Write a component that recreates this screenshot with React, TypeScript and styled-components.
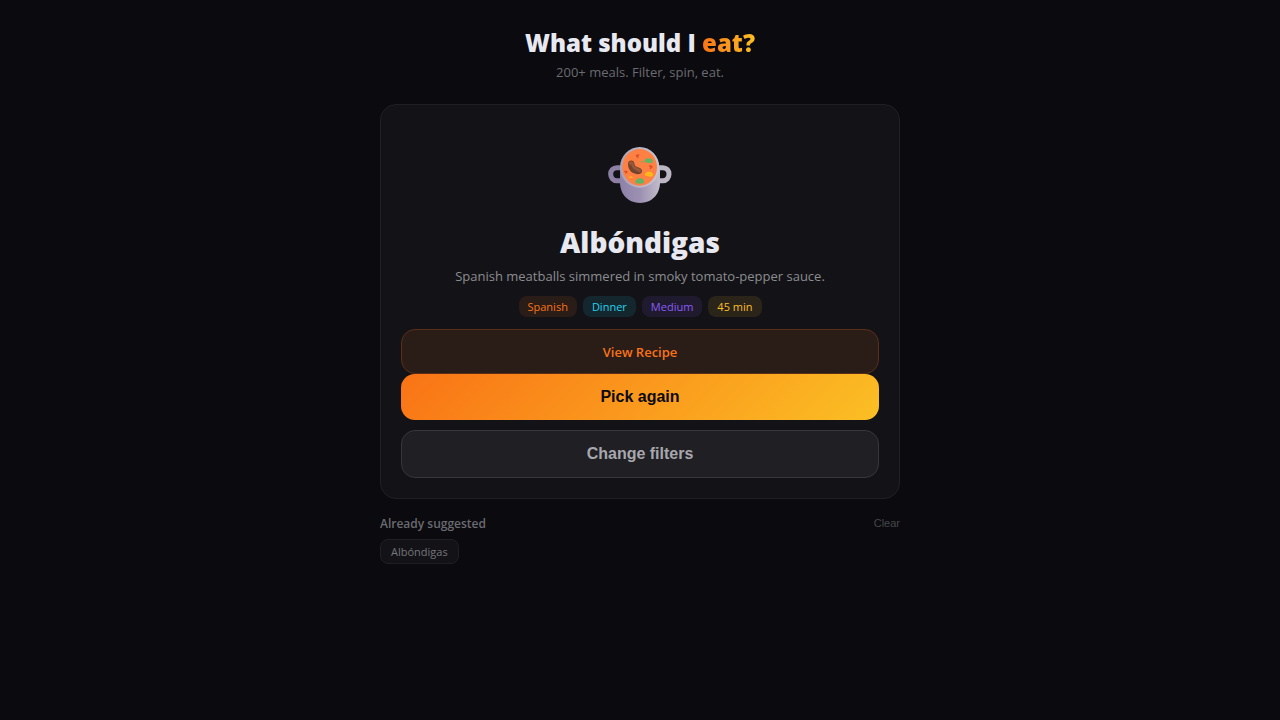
import React from "react";
import styled, { createGlobalStyle } from "styled-components";

const GlobalStyle = createGlobalStyle`
  *, *::before, *::after { box-sizing: border-box; }
  body {
    margin: 0;
    min-height: 100vh;
    background: #0a0a0f;
    color: #e8e8f0;
    font-family: "Segoe UI", "Open Sans", "Noto Sans", sans-serif;
  }
  button { cursor: pointer; }
`;

const Page = styled.main`
  width: 100%;
  max-width: 552px;
  margin: 0 auto;
  padding: 24px 16px;
`;

const Header = styled.header`
  text-align: center;
  margin-bottom: 22px;
`;

const Title = styled.h1`
  margin: 0;
  font-size: 24px;
  font-weight: 800;
  line-height: 38px;
`;

const Accent = styled.span`
  background: linear-gradient(90deg, #f97316, #fbbf24);
  background-clip: text;
  -webkit-background-clip: text;
  color: transparent;
`;

const Subtitle = styled.p`
  margin: 0;
  font-size: 13px;
  line-height: 20px;
  color: #6b6b70;
`;

const Card = styled.section`
  display: flex;
  flex-direction: column;
  align-items: center;
  padding: 20px;
  background: #131317;
  border: 1px solid #1f1f24;
  border-radius: 16px;
  text-align: center;
`;

const MealArt = styled.svg`
  display: block;
  width: 64px;
  height: 56px;
  margin: 22px 0 20px;
`;

const MealName = styled.h2`
  margin: 0 0 4px;
  font-size: 28px;
  font-weight: 800;
  line-height: 38px;
`;

const Description = styled.p`
  margin: 0 0 8px;
  font-size: 13px;
  line-height: 23px;
  color: #8c8c90;
`;

const Tags = styled.ul`
  display: flex;
  flex-wrap: wrap;
  justify-content: center;
  gap: 6px;
  margin: 0 0 12px;
  padding: 0;
  list-style: none;
`;

const Tag = styled.li<{ $color: string; $fill: string }>`
  padding: 0 9px;
  border-radius: 8px;
  font-size: 11px;
  font-weight: 500;
  line-height: 21px;
  color: ${(p) => p.$color};
  background: ${(p) => p.$fill};
`;

const ActionButton = styled.button`
  width: 100%;
  padding: 0 16px;
  border: 1px solid transparent;
  border-radius: 14px;
  font-family: "Liberation Sans", Arial, sans-serif;
  font-size: 16px;
  font-weight: 700;
`;

const RecipeButton = styled(ActionButton)`
  height: 45px;
  font-family: "Segoe UI", "Open Sans", "Noto Sans", sans-serif;
  font-size: 13px;
  font-weight: 600;
  color: #f97316;
  background: #2a1c17;
  border-color: #5a2e17;
`;

const PickButton = styled(ActionButton)`
  height: 46px;
  border: 0;
  color: #0a0a0f;
  background: linear-gradient(135deg, #f97316, #fbbf24);
`;

const FiltersButton = styled(ActionButton)`
  height: 48px;
  margin-top: 10px;
  color: #a7a7ad;
  background: #202024;
  border-color: #36363b;
`;

const HistoryHeader = styled.div`
  display: flex;
  align-items: flex-start;
  justify-content: space-between;
  margin: 16px 0 6px;
`;

const HistoryTitle = styled.h3`
  margin: 0;
  font-size: 12px;
  font-weight: 600;
  line-height: 18px;
  color: #6b6b70;
`;

const ClearButton = styled.button`
  padding: 0;
  border: 0;
  background: none;
  font-family: "Liberation Sans", Arial, sans-serif;
  font-size: 11px;
  line-height: 16px;
  color: #47474b;
`;

const HistoryList = styled.ul`
  display: flex;
  flex-wrap: wrap;
  gap: 6px;
  margin: 0;
  padding: 0;
  list-style: none;
`;

const HistoryItem = styled.li`
  padding: 0 10px;
  border: 1px solid #1f1f24;
  border-radius: 8px;
  background: #131317;
  font-size: 11px;
  line-height: 23px;
  color: #75757a;
`;

const tags = [
  { label: "Spanish", color: "#f97316", fill: "#2a1c17" },
  { label: "Dinner", color: "#22d3ee", fill: "#15272e" },
  { label: "Medium", color: "#8b5cf6", fill: "#1f1a2e" },
  { label: "45 min", color: "#fbbf24", fill: "#2b2419" },
];

function StewPot() {
  return (
    <MealArt viewBox="24 20 192 168" aria-hidden="true">
      <defs>
        <linearGradient id="pot" x1="0" y1="0" x2="1" y2="0">
          <stop offset="0" stopColor="#8e81a8" />
          <stop offset="0.5" stopColor="#9c90b2" />
          <stop offset="1" stopColor="#c2bcc9" />
        </linearGradient>
        <linearGradient id="rim" x1="0" y1="0" x2="1" y2="0">
          <stop offset="0" stopColor="#aaa3b7" />
          <stop offset="1" stopColor="#cac5d1" />
        </linearGradient>
      </defs>
      <path d="M66 82H51C39 82 32 90 32 101S39 121 51 121H66" fill="none" stroke="#8c80a5" strokeWidth="15" />
      <path d="M174 82H188C200 82 207 90 207 101S200 121 188 121H174" fill="none" stroke="#bcb6c4" strokeWidth="15" />
      <path d="M60 80V126C60 164 86 188 120 188S180 164 180 126V80Z" fill="url(#pot)" />
      <ellipse cx="119" cy="81" rx="59" ry="61" fill="url(#rim)" />
      <ellipse cx="119" cy="81" rx="52" ry="55" fill="#ff8043" />
      <path d="M84 71C84 63 90 60 97 61C104 62 102 71 106 76C110 82 123 80 126 90C128 101 115 105 102 99C91 95 84 84 84 71Z" fill="#74432e" />
      <path d="M91 69C94 65 98 69 99 76C102 85 112 86 119 91" fill="none" stroke="#96583b" strokeWidth="9" strokeLinecap="round" />
      <path d="M133 63C134 56 141 52 147 55C154 53 160 59 159 66C150 70 139 69 133 63Z" fill="#63b365" />
      <path d="M119 66C123 61 130 62 134 66Z" fill="#63b365" />
      <path d="M105 127C107 117 114 113 120 114C128 113 134 120 132 128C124 131 113 131 105 127Z" fill="#63b365" />
      <path d="M134 104C135 96 142 92 149 95C156 94 161 100 159 107C151 111 141 109 134 104Z" fill="#fcb719" />
      <path d="M86 112C88 106 96 106 99 113Z" fill="#fcb719" />
      <g fill="none" stroke="#d64c27" strokeWidth="4" strokeLinecap="round" strokeLinejoin="round">
        <path d="M116 44L109 46L114 51" />
        <path d="M149 77L156 79L151 84" />
        <path d="M74 93L81 94L77 98" />
      </g>
    </MealArt>
  );
}

export default function App() {
  return (
    <>
      <GlobalStyle />
      <Page>
        <Header>
          <Title>
            What should I <Accent>eat?</Accent>
          </Title>
          <Subtitle>200+ meals. Filter, spin, eat.</Subtitle>
        </Header>
        <Card>
          <StewPot />
          <MealName>Albóndigas</MealName>
          <Description>Spanish meatballs simmered in smoky tomato-pepper sauce.</Description>
          <Tags>
            {tags.map((tag) => (
              <Tag key={tag.label} $color={tag.color} $fill={tag.fill}>
                {tag.label}
              </Tag>
            ))}
          </Tags>
          <RecipeButton type="button">View Recipe</RecipeButton>
          <PickButton type="button">Pick again</PickButton>
          <FiltersButton type="button">Change filters</FiltersButton>
        </Card>
        <HistoryHeader>
          <HistoryTitle>Already suggested</HistoryTitle>
          <ClearButton type="button">Clear</ClearButton>
        </HistoryHeader>
        <HistoryList>
          <HistoryItem>Albóndigas</HistoryItem>
        </HistoryList>
      </Page>
    </>
  );
}
